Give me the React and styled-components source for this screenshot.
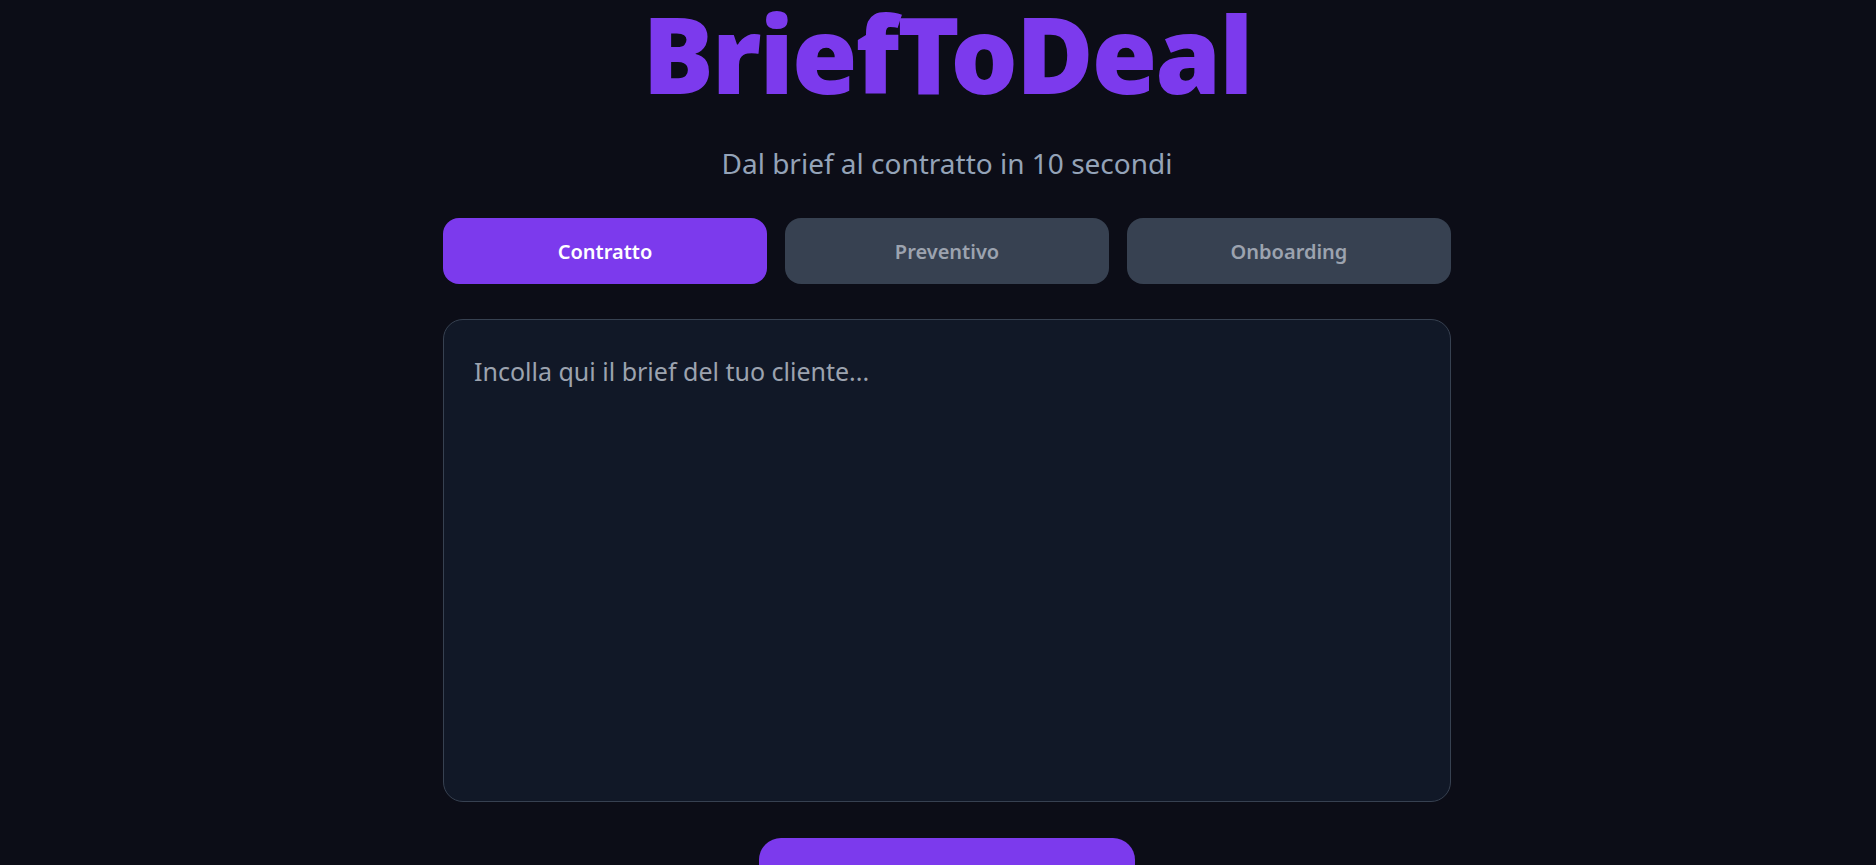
import React, { useState } from "react";
import styled, { createGlobalStyle } from "styled-components";

const GlobalStyle = createGlobalStyle`
  * { box-sizing: border-box; }
  body {
    margin: 0;
    background-color: #0c0d17;
    font-family: "Noto Sans", "Open Sans", sans-serif;
  }
`;

const Page = styled.div`
  min-height: 100vh;
  display: flex;
  flex-direction: column;
  align-items: center;
  padding-left: 18px;
`;

const Title = styled.h1`
  margin: 0;
  font-size: 106px;
  line-height: 1;
  font-weight: 900;
  letter-spacing: -2px;
  color: #7c3aed;
`;

const Subtitle = styled.p`
  margin: 38px 0 0;
  font-size: 28px;
  line-height: 38px;
  color: #94a3b8;
`;

const Tabs = styled.div`
  margin-top: 36px;
  width: 1008px;
  display: grid;
  grid-template-columns: repeat(3, 1fr);
  gap: 18px;
`;

const Tab = styled.button`
  height: 66px;
  border: none;
  border-radius: 16px;
  font-family: inherit;
  font-size: 20px;
  font-weight: 600;
  cursor: pointer;
  background-color: ${(p) => (p.active ? "#7c3aed" : "#374151")};
  color: ${(p) => (p.active ? "#ffffff" : "#9ca3af")};
`;

const Brief = styled.textarea`
  margin-top: 35px;
  width: 1008px;
  height: 483px;
  resize: none;
  padding: 34px 30px;
  background-color: #111827;
  border: 1px solid #374151;
  border-radius: 20px;
  font-family: inherit;
  font-size: 25px;
  color: #e5e7eb;
  outline: none;

  &::placeholder {
    color: #9ca3af;
  }
`;

const Submit = styled.button`
  margin-top: 36px;
  width: 376px;
  height: 72px;
  padding-top: 14px;
  border: none;
  border-radius: 22px;
  background-color: #7c3aed;
  color: #ffffff;
  font-family: inherit;
  font-size: 18px;
  font-weight: 700;
`;

const modes = ["Contratto", "Preventivo", "Onboarding"];

export default function App() {
  const [mode, setMode] = useState("Contratto");

  return (
    <Page>
      <GlobalStyle />
      <Title>BriefToDeal</Title>
      <Subtitle>Dal brief al contratto in 10 secondi</Subtitle>
      <Tabs>
        {modes.map((m) => (
          <Tab key={m} active={mode === m} onClick={() => setMode(m)}>
            {m}
          </Tab>
        ))}
      </Tabs>
      <Brief placeholder="Incolla qui il brief del tuo cliente..." />
      <Submit>Genera {mode}</Submit>
    </Page>
  );
}
